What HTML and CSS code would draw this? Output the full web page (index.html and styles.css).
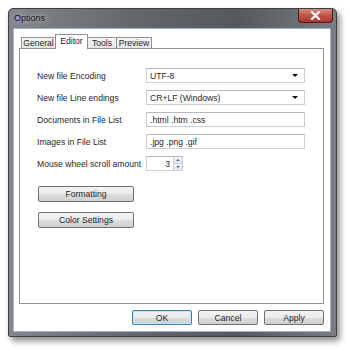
FILE: index.html
```html
<html lang="en">
<head>
    <meta charset="UTF-8">
    <title>Options</title>
<link rel="stylesheet" href="styles.css">
</head>
<body>
    <div class="window">
        <div class="titlebar">
            <span class="title">Options</span>
            <span class="close">
                <svg width="11" height="9" viewBox="0 0 11 9">
                    <path d="M2 1 L9 8 M9 1 L2 8" stroke="#fff" stroke-width="2.2" stroke-linecap="square"/>
                </svg>
            </span>
        </div>
        <div class="client">
            <div class="tabs">
                <span class="tab t-general">General</span>
                <span class="tab active t-editor">Editor</span>
                <span class="tab t-tools">Tools</span>
                <span class="tab t-preview">Preview</span>
            </div>
            <div class="panel">
                <div class="fields">
                    <label>New file Encoding</label>
                    <div class="combo"><span>UTF-8</span><span class="arrow"></span></div>

                    <label>New file Line endings</label>
                    <div class="combo"><span>CR+LF (Windows)</span><span class="arrow"></span></div>

                    <label>Documents in File List</label>
                    <div class="textbox">.html .htm .css</div>

                    <label>Images in File List</label>
                    <div class="textbox">.jpg .png .gif</div>

                    <label>Mouse wheel scroll amount</label>
                    <div class="spin">
                        <span class="spin-value">3</span>
                        <span class="spin-btns">
                            <span class="up"></span>
                            <span class="down"></span>
                        </span>
                    </div>
                </div>
                <button class="btn wide first">Formatting</button>
                <button class="btn wide">Color Settings</button>
            </div>
            <div class="footer">
                <button class="btn default">OK</button>
                <button class="btn">Cancel</button>
                <button class="btn">Apply</button>
            </div>
        </div>
    </div>
</body>
</html>
```

FILE: styles.css
```css
body {
    margin: 0;
    padding: 8px 0 0 8px;
    background-color: #ffffff;
    font-family: "Liberation Sans", Arial, sans-serif;
    font-size: 8.6px;
    color: #1f1f1f;
}
.window {
    width: 329px;
    height: 329px;
    box-sizing: border-box;
    border-radius: 5px 5px 2px 2px;
    border: 1px solid #3c3f44;
    background: linear-gradient(90deg, #83878c 0%, #62656a 40%, #55585d 70%, #7a7e83 100%);
    box-shadow: 3px 4px 6px rgba(0, 0, 0, 0.45);
    display: flex;
    flex-direction: column;
}
.titlebar {
    height: 19px;
    display: flex;
    justify-content: space-between;
    align-items: flex-start;
}
.title {
    padding: 4px 0 0 5px;
    color: #101010;
    font-size: 9px;
    text-shadow: 0 0 5px rgba(255, 255, 255, 0.8);
}
.close {
    width: 35px;
    height: 14px;
    margin-right: 3px;
    box-sizing: border-box;
    border: 1px solid #4a1c1c;
    border-top: none;
    border-radius: 0 0 4px 4px;
    background: linear-gradient(#d98a80, #c0544a 50%, #a8372e);
    display: flex;
    align-items: center;
    justify-content: center;
}
.client {
    margin: 0 5px 4px 4px;
    flex: 1;
    background-color: #ffffff;
    border: 1px solid #9cb4cf;
    display: flex;
    flex-direction: column;
    padding: 5px 6px 0 5px;
}
.tabs {
    height: 14px;
    display: flex;
    align-items: flex-end;
    padding-left: 2px;
}
.tab {
    height: 11px;
    box-sizing: border-box;
    border: 1px solid #8e9297;
    border-bottom: none;
    border-right: none;
    background: linear-gradient(#f6f6f6, #e4e4e4);
    text-align: center;
    line-height: 11px;
    color: #1f1f1f;
    white-space: nowrap;
}
.t-general { width: 34px; }
.t-editor { width: 33px; }
.t-tools { width: 28px; }
.t-preview { width: 36px; border-right: 1px solid #8e9297; }
.tab.active {
    height: 15px;
    line-height: 12px;
    background: #ffffff;
    border-right: 1px solid #8e9297;
    margin-bottom: -1px;
    position: relative;
}
.tab.active + .tab {
    border-left: none;
}
.panel {
    height: 256px;
    box-sizing: border-box;
    border: 1px solid #8e9297;
    padding: 19px 0 0 17px;
    display: flex;
    flex-direction: column;
    align-items: flex-start;
}
.fields {
    display: grid;
    grid-template-columns: 109px 159px;
    grid-auto-rows: 15px;
    row-gap: 7px;
    align-items: center;
}
.fields label {
    color: #262626;
    white-space: nowrap;
}
.combo, .textbox, .spin {
    height: 15px;
    box-sizing: border-box;
    border: 1px solid #c9ced6;
    border-top-color: #b4b9c0;
    background: #ffffff;
    display: flex;
    align-items: center;
    padding-left: 3px;
}
.combo {
    justify-content: space-between;
    padding-right: 6px;
}
.arrow {
    width: 0;
    height: 0;
    border-left: 3px solid transparent;
    border-right: 3px solid transparent;
    border-top: 3px solid #111111;
}
.spin {
    width: 37px;
    padding: 0;
    justify-content: flex-end;
}
.spin-value {
    padding-right: 3px;
}
.spin-btns {
    width: 8px;
    height: 13px;
    display: flex;
    flex-direction: column;
    border-left: 1px solid #c9ced6;
}
.up, .down {
    flex: 1;
    background: linear-gradient(#f3f5f8, #dfe4ea);
    display: flex;
    align-items: center;
    justify-content: center;
}
.up {
    border-bottom: 1px solid #c9ced6;
}
.up::after, .down::after {
    content: "";
    border-left: 2px solid transparent;
    border-right: 2px solid transparent;
}
.up::after {
    border-bottom: 2px solid #4c6e96;
}
.down::after {
    border-top: 2px solid #4c6e96;
}
.btn {
    height: 15px;
    box-sizing: border-box;
    border: 1px solid #707070;
    border-radius: 2px;
    background: linear-gradient(#f3f3f3 0%, #ebebeb 50%, #dddddd 51%, #cfcfcf 100%);
    font-family: "Liberation Sans", Arial, sans-serif;
    font-size: 8.6px;
    color: #1f1f1f;
    padding: 0;
    cursor: pointer;
}
.btn.wide {
    width: 96px;
    height: 16px;
    margin-left: 1px;
    margin-top: 10px;
}
.btn.wide.first {
    margin-top: 15px;
}
.btn.default {
    border-color: #3c7fb1;
    box-shadow: inset 0 0 0 1px #bde6fd;
}
.footer {
    display: flex;
    justify-content: flex-end;
    gap: 6px;
    margin-top: 6px;
}
.footer .btn {
    width: 60px;
}
```
